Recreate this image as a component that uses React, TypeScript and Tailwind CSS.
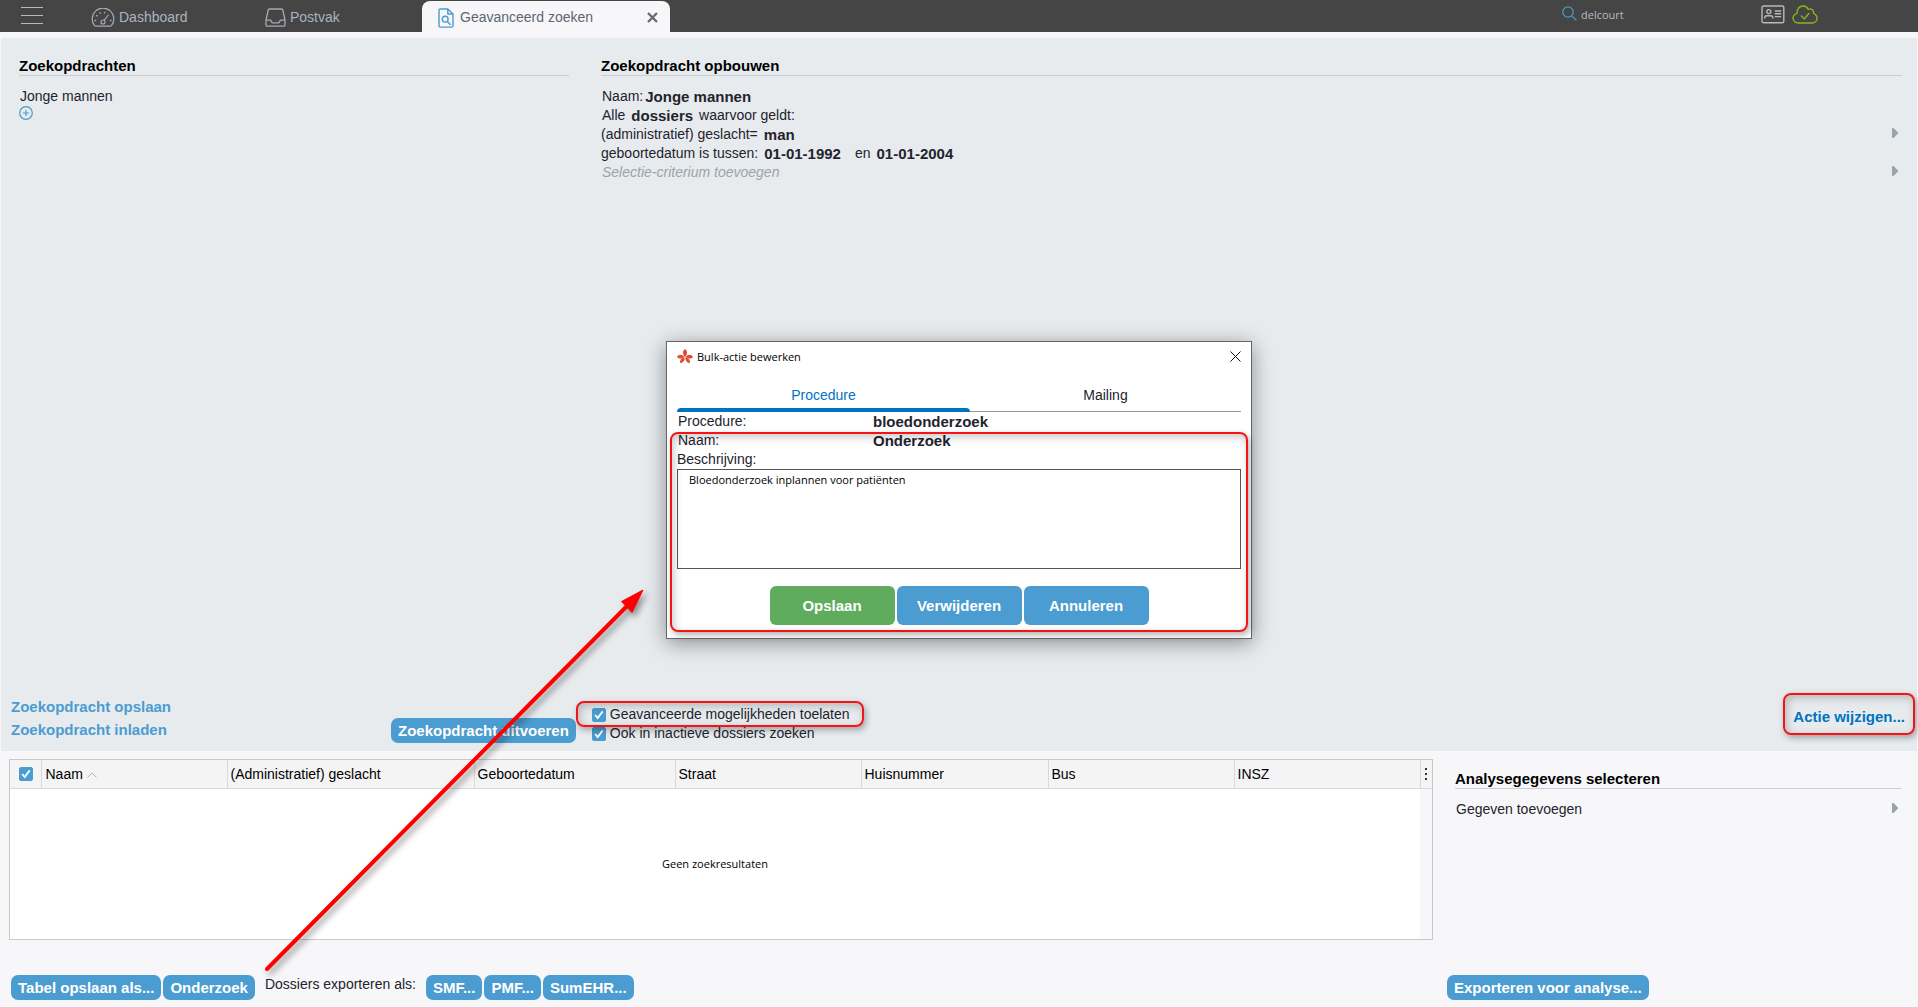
import { useState } from 'react'
import clsx from 'clsx'

const columns = [
  { label: '(Administratief) geslacht', width: 'w-[247px]' },
  { label: 'Geboortedatum', width: 'w-[201px]' },
  { label: 'Straat', width: 'w-[186px]' },
  { label: 'Huisnummer', width: 'w-[187px]' },
  { label: 'Bus', width: 'w-[186px]' },
  { label: 'INSZ', width: '' },
]

const exportFormats = ['SMF...', 'PMF...', 'SumEHR...']

function GaugeIcon() {
  return (
    <svg width="24" height="19" viewBox="0 0 24 19" fill="none" stroke="#a3abb3" strokeWidth="1.2" strokeLinecap="round">
      <path d="M3.4 17.4A10.8 10.8 0 1 1 20.6 17.4Q20 18.2 19 18.2H5Q4 18.2 3.4 17.4Z" />
      <circle cx="12" cy="14" r="2" />
      <path d="M13.2 12.3 17.3 7" />
      <path d="M4 12.4h.6M5.7 7.6l.4.3M9 4.8l.2.4M13.6 4.4v.4M19.4 12.4h.6" strokeWidth="1.5" />
    </svg>
  )
}

function InboxIcon() {
  return (
    <svg width="21" height="19" viewBox="0 0 21 19" fill="none" stroke="#a3abb3" strokeWidth="1.3" strokeLinejoin="round">
      <path d="M4.4 1h12.2a1.2 1.2 0 0 1 1.2 1L20 12v5a1.2 1.2 0 0 1-1.2 1.2H2.2A1.2 1.2 0 0 1 1 17v-5L3.2 2a1.2 1.2 0 0 1 1.2-1Z" />
      <path d="M1 12.2h4.6l1.6 2.6h6.6l1.6-2.6H20" />
    </svg>
  )
}

function FileSearchIcon() {
  return (
    <svg width="16" height="20" viewBox="0 0 16 20" fill="none" stroke="#4b9cd0" strokeWidth="1.4" strokeLinejoin="round">
      <path d="M2.2 1h7.6L15 6v11.8a1.3 1.3 0 0 1-1.3 1.3H2.2A1.3 1.3 0 0 1 1 17.8V2.2A1.2 1.2 0 0 1 2.2 1Z" />
      <path d="M9.8 1v5H15" />
      <circle cx="7.2" cy="11.2" r="2.9" />
      <path d="m9.4 13.4 2.8 3" strokeLinecap="round" />
    </svg>
  )
}

function CardIcon() {
  return (
    <svg width="24" height="19" viewBox="0 0 24 19" fill="none" stroke="#b9b9b9" strokeWidth="1.4">
      <rect x="1" y="1" width="21.8" height="16.8" rx="1.6" />
      <circle cx="7.8" cy="6.6" r="2" />
      <path d="M3.8 13.6v-.8q0-2 2-2h4q2 0 2 2v.8M13.8 6h6.4M13.8 8.8h6.4M13.8 11.6h6.4" />
    </svg>
  )
}

function CloudIcon() {
  return (
    <svg width="26" height="19" viewBox="0 0 26 19" fill="none" stroke="#8ab51e" strokeWidth="1.4" strokeLinecap="round" strokeLinejoin="round">
      <path d="M6.4 18A5 5 0 0 1 1 13.2C1 10.6 2.9 9.2 5 8.4 4.8 4 7.6 1 11 1c2.6 0 4.4 1.4 5.2 3.4 2.8-1.5 6 .6 5.4 4C23.6 9.2 25 11 25 13.2A4.8 4.8 0 0 1 20.2 18Z" />
      <path d="m9.4 11 3 2.9 4.4-5.4" />
    </svg>
  )
}

function FlowerIcon() {
  return (
    <svg width="16" height="15" viewBox="0 0 16 15" fill="#e04e33">
      <path d="M8 0C10.6 2 10.8 4.6 8.7 7.4H7.3C5.2 4.6 5.4 2 8 0Z" />
      <path d="M0 8C1.6 5 4.8 4.9 7.4 7.7 5 10 2 10.2 0 8Z" />
      <path d="M16 8C14.4 5 11.2 4.9 8.6 7.7 11 10 14 10.2 16 8Z" />
      <path d="M7.6 8.2C8 11.4 6.4 13.6 3.2 14.2 2.6 11 4.3 8.8 7.6 8.2Z" />
      <path d="M8.4 8.2C8 11.4 9.6 13.6 12.8 14.2 13.4 11 11.7 8.8 8.4 8.2Z" />
    </svg>
  )
}

function MoreArrow({ label }: { label: string }) {
  return (
    <button aria-label={label} className="mr-1 flex h-4 items-center">
      <svg width="6" height="10" viewBox="0 0 6 10" fill="#98a3ad">
        <path d="M0 0h1.5L6 4.5v1L1.5 10H0Z" />
      </svg>
    </button>
  )
}

function Highlight({ className }: { className: string }) {
  return (
    <span
      className={clsx(
        'pointer-events-none absolute rounded-lg border-2 border-[#f51414] shadow-[2px_3px_6px_rgba(0,0,0,0.3),inset_2px_3px_8px_rgba(0,0,0,0.22)]',
        className,
      )}
    />
  )
}

function Checkbox({ id, label }: { id: string; label?: string }) {
  const [checked, setChecked] = useState(true)

  return (
    <span className="flex h-[19px] items-center gap-1">
      <span className="grid">
        <input
          id={id}
          type="checkbox"
          aria-label={label ? undefined : 'Alles selecteren'}
          checked={checked}
          onChange={() => setChecked(!checked)}
          className="col-start-1 row-start-1 size-[14px] appearance-none rounded-[2px] border border-[#4b9cd0] bg-white checked:bg-[#4b9cd0]"
        />
        <svg width="14" height="14" viewBox="0 0 14 14" className="pointer-events-none col-start-1 row-start-1" fill="none" stroke="#fff" strokeWidth="1.8">
          <path d="m3.2 7 2.5 3 5-6.6" />
        </svg>
      </span>
      {label && <label htmlFor={id}>{label}</label>}
    </span>
  )
}

function ActionButton({ children }: { children: string }) {
  return (
    <button className="h-[25px] rounded-[7px] bg-[#4b9cd0] px-[7px] text-[15px] font-bold whitespace-nowrap text-white">
      {children}
    </button>
  )
}

function SectionTitle({ children }: { children: string }) {
  return (
    <h2 className="border-b border-[#c9ced3] text-[15px] leading-[18px] font-bold text-black">
      {children}
    </h2>
  )
}

function Value({ children }: { children: string }) {
  return <b className="text-[15px]">{children}</b>
}

function TopBar() {
  return (
    <header className="flex h-8 shrink-0 items-center bg-[#454545] text-[#a9b4c0]">
      <button aria-label="Menu" className="ml-[21px] flex h-[18px] w-[22px] flex-col justify-between pb-px">
        <span className="h-px w-full bg-[#b5bbc2]" />
        <span className="h-px w-full bg-[#b5bbc2]" />
        <span className="h-px w-full bg-[#b5bbc2]" />
      </button>
      <nav className="flex h-full items-center">
        <a href="#dashboard" className="ml-12 flex w-[174px] items-center gap-1 pt-[3px]">
          <GaugeIcon />
          Dashboard
        </a>
        <a href="#postvak" className="flex w-[157px] items-center gap-1 pt-[3px]">
          <InboxIcon />
          Postvak
        </a>
        <div className="flex h-[31px] w-[248px] items-center self-end rounded-t-lg bg-[#f7f7f9] pr-3 pl-4 text-[#5d6670]">
          <a href="#zoeken" className="flex flex-1 items-center gap-1.5 pt-0.5">
            <FileSearchIcon />
            Geavanceerd zoeken
          </a>
          <button aria-label="Tabblad sluiten" className="pt-0.5">
            <svg width="11" height="11" viewBox="0 0 11 11" stroke="#666b70" strokeWidth="2.4">
              <path d="m1 1 9 9M10 1l-9 9" />
            </svg>
          </button>
        </div>
      </nav>
      <div className="ml-auto flex h-full items-start pt-[5px]">
        <label htmlFor="patient" className="pt-px">
          <svg width="15" height="15" viewBox="0 0 15 15" fill="none" stroke="#4b9cd0" strokeWidth="1.2">
            <circle cx="6" cy="6" r="5.2" />
            <path d="m9.8 9.8 4.6 4.6" />
          </svg>
        </label>
        <input
          id="patient"
          aria-label="Patiënt zoeken"
          defaultValue="delcourt"
          className="ml-1 h-[18px] w-[180px] bg-transparent font-['Open_Sans','Noto_Sans',sans-serif] text-[11px] text-[#b3bcc5] outline-none"
        />
        <button aria-label="Kaart lezen">
          <CardIcon />
        </button>
        <button aria-label="Verbonden" className="mr-[100px] ml-[7px]">
          <CloudIcon />
        </button>
      </div>
    </header>
  )
}

function QueryBuilder() {
  return (
    <main className="mx-px mt-1.5 flex flex-1 flex-col bg-[#e7ebee]">
      <div className="flex flex-1 gap-8 pt-[19px] pr-[15px] pl-[18px]">
        <section className="w-[550px]">
          <SectionTitle>Zoekopdrachten</SectionTitle>
          <p className="mt-[11px] pl-px">Jonge mannen</p>
          <button aria-label="Zoekopdracht toevoegen" className="block">
            <svg width="14" height="14" viewBox="0 0 14 14" fill="none" stroke="#4b9cd0" strokeWidth="1.2">
              <circle cx="7" cy="7" r="6.3" />
              <path d="M7 4v6M4 7h6" />
            </svg>
          </button>
        </section>
        <section className="flex-1">
          <SectionTitle>Zoekopdracht opbouwen</SectionTitle>
          <div className="mt-[11px]">
            <p className="flex gap-0.5 pl-px">
              Naam: <Value>Jonge mannen</Value>
            </p>
            <p className="flex gap-1.5 pl-px">
              Alle <Value>dossiers</Value> waarvoor geldt:
            </p>
            <div className="flex justify-between">
              <p className="flex gap-1.5">
                (administratief) geslacht= <Value>man</Value>
              </p>
              <MoreArrow label="Criterium geslacht" />
            </div>
            <p className="flex gap-1.5">
              geboortedatum is tussen: <Value>01-01-1992</Value>
              <span className="ml-2">en</span>
              <Value>01-01-2004</Value>
            </p>
            <div className="flex justify-between pl-px">
              <button className="text-[#9ba3ab] italic">Selectie-criterium toevoegen</button>
              <MoreArrow label="Selectie-criterium" />
            </div>
          </div>
        </section>
      </div>
      <div className="flex items-end pb-2 pl-2.5">
        <div className="flex w-[380px] flex-col items-start gap-1 self-end pb-1 text-[15px] font-bold text-[#4b9cd0]">
          <button>Zoekopdracht opslaan</button>
          <button>Zoekopdracht inladen</button>
        </div>
        <ActionButton>Zoekopdracht uitvoeren</ActionButton>
        <div className="relative ml-4">
          <Checkbox id="geavanceerd" label="Geavanceerde mogelijkheden toelaten" />
          <Checkbox id="inactief" label="Ook in inactieve dossiers zoeken" />
          <Highlight className="-top-1 -right-3.5 -left-4 h-[26px]" />
        </div>
        <div className="relative mr-3 mb-4 ml-auto">
          <button className="text-[15px] font-bold text-[#0073bf]">Actie wijzigen...</button>
          <Highlight className="-inset-x-2.5 -top-3.5 -bottom-2" />
        </div>
      </div>
    </main>
  )
}

function ResultTable() {
  return (
    <div className="relative flex-1 border border-[#c9c9cc] bg-white">
      <table className="w-full table-fixed border-collapse text-left text-black">
        <thead className="bg-[#f4f4f4]">
          <tr className="h-7 border-b border-[#d9d9dc]">
            <th className="w-[31px] border-r border-[#d9d9dc] pl-[9px]">
              <Checkbox id="alles" />
            </th>
            <th className="w-[186px] border-r border-[#d9d9dc] pt-0.5 pl-1 font-normal">
              <span className="flex items-center gap-1">
                Naam
                <svg width="10" height="6" viewBox="0 0 10 6" fill="none" stroke="#b5b5b8">
                  <path d="m.5 5.5 4.5-4.5 4.5 4.5" />
                </svg>
              </span>
            </th>
            {columns.map((col) => (
              <th key={col.label} className={clsx('border-r border-[#d9d9dc] pt-0.5 pl-[3px] font-normal', col.width)}>
                {col.label}
              </th>
            ))}
            <th className="w-3">
              <button aria-label="Kolommen" className="mx-auto flex flex-col gap-[3px]">
                <span className="size-0.5 bg-[#333]" />
                <span className="size-0.5 bg-[#333]" />
                <span className="size-0.5 bg-[#333]" />
              </button>
            </th>
          </tr>
        </thead>
        <tbody>
          <tr className="h-[151px]">
            <td colSpan={8} className="text-center font-['Open_Sans','Noto_Sans',sans-serif] text-[11px]">
              Geen zoekresultaten
            </td>
            <td className="bg-[#f7f7f9]" />
          </tr>
        </tbody>
      </table>
    </div>
  )
}

function Results() {
  return (
    <footer className="flex shrink-0 gap-3.5 pt-2 pr-4 pb-[7px] pl-[9px]">
      <div className="flex flex-1 flex-col">
        <ResultTable />
        <div className="mt-[35px] flex gap-0.5 pl-0.5">
          <ActionButton>Tabel opslaan als...</ActionButton>
          <ActionButton>Onderzoek</ActionButton>
          <span className="mx-2">Dossiers exporteren als:</span>
          {exportFormats.map((format) => (
            <ActionButton key={format}>{format}</ActionButton>
          ))}
        </div>
      </div>
      <aside className="flex w-[455px] flex-col">
        <div className="pt-[11px] pl-2">
          <SectionTitle>Analysegegevens selecteren</SectionTitle>
          <div className="mt-[11px] flex justify-between pl-px">
            <button>Gegeven toevoegen</button>
            <MoreArrow label="Gegeven" />
          </div>
        </div>
        <div className="mt-auto">
          <ActionButton>Exporteren voor analyse...</ActionButton>
        </div>
      </aside>
    </footer>
  )
}

function BulkActionDialog() {
  const [tab, setTab] = useState('Procedure')

  return (
    <div
      role="dialog"
      aria-label="Bulk-actie bewerken"
      className="w-[586px] border border-[#666] bg-white px-2.5 pb-[13px] shadow-[0_4px_20px_rgba(0,0,0,0.4)]"
    >
      <div className="flex h-[30px] items-center font-['Open_Sans','Noto_Sans',sans-serif] text-[11px] text-black">
        <FlowerIcon />
        <span className="ml-1 flex-1">Bulk-actie bewerken</span>
        <button aria-label="Sluiten">
          <svg width="11" height="11" viewBox="0 0 11 11" stroke="#111">
            <path d="m.5.5 10 10M10.5.5l-10 10" />
          </svg>
        </button>
      </div>
      <div role="tablist" className="mt-2.5 flex">
        {['Procedure', 'Mailing'].map((name) => (
          <button
            key={name}
            role="tab"
            aria-selected={tab === name}
            onClick={() => setTab(name)}
            className={clsx(
              'flex flex-col justify-between pt-1',
              name === 'Procedure' ? 'w-[293px]' : 'flex-1',
              tab === name && 'text-[#0073bf]',
            )}
          >
            <span className="w-full">{name}</span>
            <span
              className={clsx(
                'mt-[3px] w-full',
                tab === name ? 'h-1 rounded-t-sm bg-[#0073bf]' : 'h-px bg-[#999]',
              )}
            />
          </button>
        ))}
      </div>
      <div className="relative">
        <div className="flex pl-px">
          <span className="w-[195px]">Procedure:</span>
          <Value>bloedonderzoek</Value>
        </div>
        <div className="flex pl-px">
          <span className="w-[195px]">Naam:</span>
          <Value>Onderzoek</Value>
        </div>
        <label htmlFor="beschrijving" className="block">
          Beschrijving:
        </label>
        <textarea
          id="beschrijving"
          defaultValue="Bloedonderzoek inplannen voor patiënten"
          className="block h-[100px] w-full resize-none border border-[#555] px-[11px] font-['Open_Sans','Noto_Sans',sans-serif] text-[11px] text-black outline-none"
        />
        <div className="mt-[17px] flex justify-center gap-0.5 text-[15px] font-bold text-white">
          <button className="h-[39px] w-[125px] rounded-md bg-[#5fac5f]">Opslaan</button>
          <button className="h-[39px] w-[125px] rounded-md bg-[#4b9cd0]">Verwijderen</button>
          <button className="h-[39px] w-[125px] rounded-md bg-[#4b9cd0]">Annuleren</button>
        </div>
        <Highlight className="-inset-x-[7px] top-5 -bottom-[7px]" />
      </div>
    </div>
  )
}

function PointerArrow() {
  return (
    <svg
      className="pointer-events-none absolute bottom-[27px] left-[260px] drop-shadow-[3px_4px_3px_rgba(0,0,0,0.4)]"
      width="390"
      height="396"
      viewBox="0 0 390 396"
    >
      <path d="M7 385 370 19" stroke="#f00" strokeWidth="4" strokeLinecap="round" />
      <path d="M383 6 361.5 17.5 372 28.5Z" fill="#f00" stroke="#f00" />
    </svg>
  )
}

export default function App() {
  return (
    <div className="relative flex min-h-screen flex-col bg-[#f7f7f9] font-['Liberation_Sans',Arial,sans-serif] text-[14px] leading-[19px] text-[#23232d]">
      <TopBar />
      <QueryBuilder />
      <Results />
      <div className="absolute inset-0 flex items-center justify-center pb-7">
        <BulkActionDialog />
      </div>
      <PointerArrow />
    </div>
  )
}
